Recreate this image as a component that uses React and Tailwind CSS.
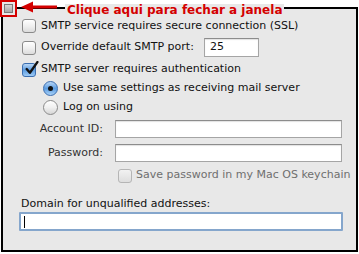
import React from 'react';

const FONT = { fontFamily: '"Lucida Grande", "DejaVu Sans", sans-serif' };

function Box({ checked, disabled }) {
  if (checked) {
    return (
      <span className="relative block w-[14px] h-[14px] rounded-[3px] border border-[#3b6eb0] bg-gradient-to-b from-[#b8d6f5] via-[#5a9be0] to-[#9dcaf5]">
        <svg viewBox="0 0 14 14" className="absolute left-[1px] top-[-3px] w-[15px] h-[15px]">
          <path d="M2.5 7.5 L5.5 11 L12.5 1" fill="none" stroke="#111" strokeWidth="2.2" strokeLinecap="round" strokeLinejoin="round" />
        </svg>
      </span>
    );
  }
  return (
    <span
      className={`block w-[14px] h-[14px] rounded-[3px] border bg-gradient-to-b ${
        disabled ? 'border-[#b5b5b5] from-[#f2f2f2] to-[#dedede]' : 'border-[#8a8a8a] from-white via-[#f0f0f0] to-[#dcdcdc]'
      }`}
    />
  );
}

function Radio({ on }) {
  return on ? (
    <span className="flex items-center justify-center w-[15px] h-[15px] rounded-full border border-[#3b6eb0] bg-gradient-to-b from-[#b8d6f5] via-[#5a9be0] to-[#a9d2f7]">
      <span className="block w-[5px] h-[5px] rounded-full bg-[#111]" />
    </span>
  ) : (
    <span className="block w-[15px] h-[15px] rounded-full border border-[#8a8a8a] bg-gradient-to-b from-white via-[#f0f0f0] to-[#d6d6d6]" />
  );
}

function Field({ className, children }) {
  return (
    <div className={`bg-white border border-[#a5a5a5] border-t-[#8c8c8c] shadow-[inset_0_1px_1px_rgba(0,0,0,0.12)] ${className}`}>
      {children}
    </div>
  );
}

export default function App() {
  return (
    <div className="relative w-[359px] h-[254px] bg-white text-[11px] text-[#111]" style={FONT}>
      <div className="absolute left-[1px] top-[7px] w-[357px] h-[245px] border-2 border-black bg-[#e8e8e8]">
        <div className="flex flex-col pt-[6px]">
          <div className="flex items-center h-[22px] pl-[19px] gap-[5px]">
            <Box />
            <span>SMTP service requires secure connection (SSL)</span>
          </div>
          <div className="flex items-center h-[21px] pl-[19px] gap-[5px]">
            <Box />
            <span className="w-[158px]">Override default SMTP port:</span>
            <Field className="w-[55px] h-[19px] flex items-center pl-[5px]">25</Field>
          </div>
          <div className="flex items-center h-[23px] pl-[19px] gap-[5px]">
            <Box checked />
            <span>SMTP server requires authentication</span>
          </div>
          <div className="flex items-center h-[15px] pl-[40px] gap-[5px]">
            <Radio on />
            <span>Use same settings as receiving mail server</span>
          </div>
          <div className="flex items-center h-[23px] pl-[40px] gap-[5px]">
            <Radio />
            <span>Log on using</span>
          </div>
          <div className="flex items-center h-[20px] gap-[12px]">
            <span className="w-[100px] text-right text-[#333]">Account ID:</span>
            <Field className="w-[227px] h-[18px]" />
          </div>
          <div className="flex items-center h-[28px] gap-[12px]">
            <span className="w-[100px] text-right text-[#333]">Password:</span>
            <Field className="w-[227px] h-[18px]" />
          </div>
          <div className="flex items-center h-[17px] pl-[115px] gap-[4px]">
            <Box disabled />
            <span className="text-[#6f6f6f]">Save password in my Mac OS keychain</span>
          </div>
          <div className="mt-[13px] h-[14px] leading-[14px] pl-[18px]">Domain for unqualified addresses:</div>
          <div className="mt-[1px] ml-[16px] w-[324px] h-[19px] bg-white border-2 border-[#85a6cc] rounded-[1px] flex items-center pl-[3px]">
            <span className="block w-[1px] h-[12px] bg-black" />
          </div>
        </div>
      </div>

      <div className="absolute left-0 top-0 w-[17px] h-[17px] border-2 border-[#d40000] bg-[#e8e8e8] flex items-center justify-center">
        <span className="block w-[9px] h-[9px] border border-[#7a7a7a] bg-gradient-to-b from-[#d8d8d8] to-[#a8a8a8]" />
      </div>
      <svg className="absolute left-[21px] top-[1px]" width="36" height="12" viewBox="0 0 36 12">
        <path d="M0 6 L12 0.5 L12 11.5 Z" fill="#d40000" />
        <rect x="11" y="4.5" width="25" height="3" fill="#d40000" />
      </svg>
      <span className="absolute left-[65px] top-[4px] px-[2px] bg-[#e8e8e8] text-[12px] font-bold text-[#d40000] leading-[13px]" style={{ fontFamily: '"DejaVu Sans", sans-serif' }}>
        Clique aqui para fechar a janela
      </span>
    </div>
  );
}
